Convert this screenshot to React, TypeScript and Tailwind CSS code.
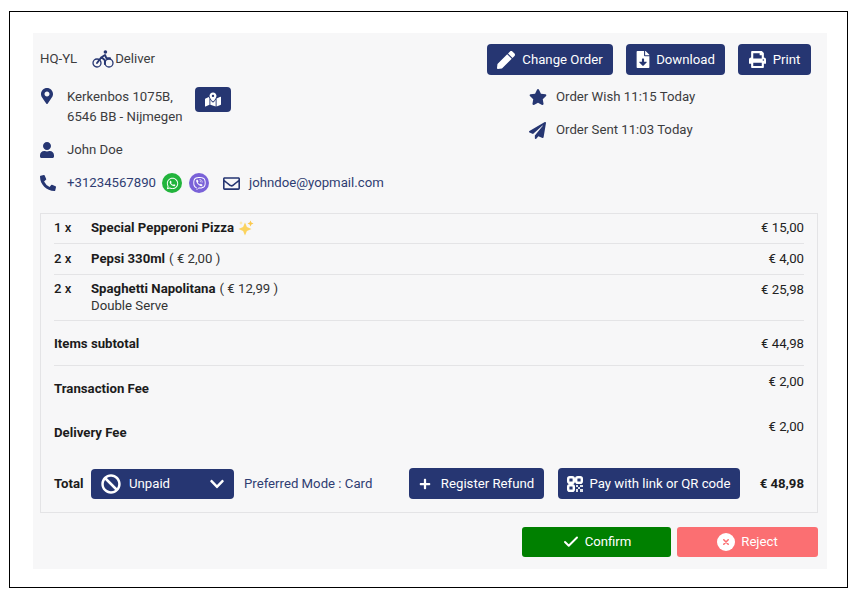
import type { ReactNode } from "react";
import { Check } from "lucide-react";
import {
  FaBan,
  FaChevronDown,
  FaFileDownload,
  FaMapMarkedAlt,
  FaMapMarkerAlt,
  FaPaperPlane,
  FaPen,
  FaPhoneAlt,
  FaPlus,
  FaPrint,
  FaRegEnvelope,
  FaStar,
  FaUser,
  FaViber,
  FaWhatsapp,
} from "react-icons/fa";

function BikeIcon() {
  return (
    <svg viewBox="0 0 22 18" className="ml-[15px] h-[18px] w-[22px] text-[#263672]" fill="none" stroke="currentColor">
      <circle cx="5" cy="13" r="4" strokeWidth="1.3" />
      <circle cx="17" cy="13" r="4" strokeWidth="1.3" />
      <circle cx="13.4" cy="2" r="1.8" fill="currentColor" stroke="none" />
      <path d="M5 13 9.5 7.2 13 5l1.4 3.2H18M9.5 7.2l3.4 3V14" strokeWidth="1.9" strokeLinejoin="round" strokeLinecap="round" />
    </svg>
  );
}

function QrIcon() {
  return (
    <svg viewBox="0 0 16 16" className="h-[16px] w-[16px]" fill="none">
      <rect x="1.2" y="1.2" width="5.6" height="5.6" rx="1.6" stroke="white" strokeWidth="2.4" />
      <rect x="9.2" y="1.2" width="5.6" height="5.6" rx="1.6" stroke="white" strokeWidth="2.4" />
      <rect x="1.2" y="9.2" width="5.6" height="5.6" rx="1.6" stroke="white" strokeWidth="2.4" />
      <path d="M9 9h2v2H9zM13 9h3v2h-3zM11 11h2v2h-2zM9 13h2v3H9zM13 13h3v3h-3z" fill="white" opacity="0.85" />
    </svg>
  );
}

function RejectIcon() {
  return (
    <svg viewBox="0 0 18 18" className="h-[18px] w-[18px]">
      <circle cx="9" cy="9" r="9" fill="white" />
      <path d="M6.8 6.8 11.2 11.2M11.2 6.8 6.8 11.2" stroke="#fb6f72" strokeWidth="1.6" strokeLinecap="round" />
    </svg>
  );
}

function Sparkles() {
  return (
    <svg viewBox="0 0 16 16" className="ml-[4px] h-[16px] w-[16px]">
      <path d="M7 2.5 8.9 7.1 13.5 9 8.9 10.9 7 15.5 5.1 10.9 0.5 9 5.1 7.1Z" fill="#fbd35e" />
      <path d="M12.5 0.5 13.4 2.6 15.5 3.5 13.4 4.4 12.5 6.5 11.6 4.4 9.5 3.5 11.6 2.6Z" fill="#fbc94f" />
      <path d="M3 1 3.6 2.4 5 3 3.6 3.6 3 5 2.4 3.6 1 3 2.4 2.4Z" fill="#fde49a" />
    </svg>
  );
}

function NavyButton({ className, children }: { className: string; children: ReactNode }) {
  return (
    <button
      type="button"
      className={`flex items-center justify-center rounded-[4px] bg-[#263672] text-white ${className}`}
    >
      {children}
    </button>
  );
}

function ItemRow({
  qty,
  name,
  note,
  price,
  className,
  children,
}: {
  qty: string;
  name: string;
  note?: string;
  price: string;
  className: string;
  children?: ReactNode;
}) {
  return (
    <div className={`flex items-start justify-between border-b border-[#e4e4e6] ${className}`}>
      <div className="flex">
        <span className="w-[37px] font-medium text-[#1c1c1c]">{qty}</span>
        <div>
          <div className="flex items-center">
            <span className="font-bold text-[#1c1c1c]">{name}</span>
            {children}
          </div>
          {note && <div className="text-[#333]">{note}</div>}
        </div>
      </div>
      <span className="text-[#222]">{price}</span>
    </div>
  );
}

export default function App() {
  return (
    <div className="h-[595px] w-[859px] bg-white pl-[9px] pt-[11px] font-['Roboto',sans-serif] text-[13.2px] leading-[20px] text-[#3c3c3e]">
      <div className="h-[577px] w-[839px] border border-black pl-[23px] pt-[21px]">
        <div className="h-[536px] w-[794px] bg-[#f7f7f8] pl-[7px] pt-[11px]">
          {/* header */}
          <div className="flex h-[169px] w-[771px] justify-between">
            <div>
              <div className="flex h-[29px] items-center">
                <span>HQ-YL</span>
                <BikeIcon />
                <span className="ml-[1px]">Deliver</span>
              </div>
              <div className="mt-[14px] flex">
                <FaMapMarkerAlt className="ml-[1px] mt-[1px] h-[16px] w-[12px] text-[#263672]" />
                <div className="ml-[14px] w-[128px]">
                  <div>Kerkenbos 1075B,</div>
                  <div>6546 BB - Nijmegen</div>
                </div>
                <NavyButton className="h-[25px] w-[36px]">
                  <FaMapMarkedAlt className="h-[15px] w-[16px]" />
                </NavyButton>
              </div>
              <div className="mt-[13px] flex items-center">
                <FaUser className="h-[16px] w-[14px] text-[#263672]" />
                <span className="ml-[13px]">John Doe</span>
              </div>
              <div className="mt-[13px] flex items-center text-[#2f3d72]">
                <FaPhoneAlt className="h-[16px] w-[16px] text-[#263672]" />
                <span className="ml-[11px]">+31234567890</span>
                <span className="ml-[6px] flex h-[20px] w-[20px] items-center justify-center rounded-full bg-[#22b43c] text-white">
                  <FaWhatsapp className="h-[13px] w-[13px]" />
                </span>
                <span className="ml-[7px] flex h-[20px] w-[20px] items-center justify-center rounded-full bg-[#7a62d8] text-white">
                  <FaViber className="h-[13px] w-[13px]" />
                </span>
                <FaRegEnvelope className="ml-[14px] h-[17px] w-[17px] text-[#263672]" />
                <span className="ml-[9px]">johndoe@yopmail.com</span>
              </div>
            </div>
            <div className="w-[324px]">
              <div className="flex h-[31px] gap-[13px]">
                <NavyButton className="w-[126px] gap-[7px]">
                  <FaPen className="h-[18px] w-[18px]" />
                  Change Order
                </NavyButton>
                <NavyButton className="w-[99px] gap-[6px]">
                  <FaFileDownload className="h-[17px] w-[14px]" />
                  Download
                </NavyButton>
                <NavyButton className="w-[73px] gap-[7px]">
                  <FaPrint className="h-[17px] w-[17px]" />
                  Print
                </NavyButton>
              </div>
              <div className="ml-[42px] mt-[12px] flex items-center">
                <FaStar className="h-[18px] w-[18px] text-[#263672]" />
                <span className="ml-[9px]">Order Wish 11:15 Today</span>
              </div>
              <div className="ml-[42px] mt-[13px] flex items-center">
                <FaPaperPlane className="h-[17px] w-[17px] text-[#263672]" />
                <span className="ml-[10px]">Order Sent 11:03 Today</span>
              </div>
            </div>
          </div>

          {/* order box */}
          <div className="h-[300px] w-[778px] border border-[#e4e4e6] px-[13px]">
            <ItemRow qty="1 x" name="Special Pepperoni Pizza" price="€ 15,00" className="h-[30px] pt-[4px]">
              <Sparkles />
            </ItemRow>
            <ItemRow qty="2 x" name="Pepsi 330ml" price="€ 4,00" className="h-[31px] pt-[5px]">
              <span className="ml-[4px] text-[#333]">( € 2,00 )</span>
            </ItemRow>
            <ItemRow
              qty="2 x"
              name="Spaghetti Napolitana"
              note="Double Serve"
              price="€ 25,98"
              className="h-[46px] pt-[5px] [&_div]:leading-[17px]"
            >
              <span className="ml-[4px] text-[#333]">( € 12,99 )</span>
            </ItemRow>
            <div className="flex h-[45px] items-center justify-between border-b border-[#e4e4e6] pt-[1px] font-bold text-[#1c1c1c]">
              <span>Items subtotal</span>
              <span className="font-normal">€ 44,98</span>
            </div>
            <div className="flex h-[44px] justify-between pt-[6px]">
              <span className="mt-[7px] font-bold text-[#1c1c1c]">Transaction Fee</span>
              <span className="text-[#222]">€ 2,00</span>
            </div>
            <div className="flex h-[44px] justify-between pt-[7px]">
              <span className="mt-[6px] font-bold text-[#1c1c1c]">Delivery Fee</span>
              <span className="text-[#222]">€ 2,00</span>
            </div>
            <div className="mt-[14px] flex h-[31px] items-center">
              <span className="w-[37px] font-bold text-[#1c1c1c]">Total</span>
              <button
                type="button"
                className="mt-[1px] flex h-[30px] w-[143px] items-center rounded-[4px] bg-[#263672] pl-[10px] pr-[9px] text-white"
              >
                <FaBan className="h-[20px] w-[20px]" />
                <span className="ml-[8px]">Unpaid</span>
                <FaChevronDown className="ml-auto h-[16px] w-[16px]" />
              </button>
              <span className="ml-[10px] w-[165px] text-[#2f3d72]">Preferred Mode : Card</span>
              <NavyButton className="h-[31px] w-[135px] gap-[10px]">
                <FaPlus className="h-[12px] w-[12px]" />
                Register Refund
              </NavyButton>
              <NavyButton className="ml-[14px] h-[31px] w-[182px] gap-[6px]">
                <QrIcon />
                Pay with link or QR code
              </NavyButton>
              <span className="ml-auto font-bold text-[#1c1c1c]">€ 48,98</span>
            </div>
          </div>

          {/* actions */}
          <div className="mt-[14px] flex w-[778px] justify-end gap-[6px]">
            <button
              type="button"
              className="flex h-[30px] w-[149px] items-center justify-center gap-[5px] rounded-[3px] bg-[#008000] text-white"
            >
              <Check className="h-[18px] w-[18px]" strokeWidth={2.6} />
              Confirm
            </button>
            <button
              type="button"
              className="flex h-[30px] w-[141px] items-center justify-center gap-[6px] rounded-[3px] bg-[#fb6f72] text-white"
            >
              <RejectIcon />
              Reject
            </button>
          </div>
        </div>
      </div>
    </div>
  );
}
